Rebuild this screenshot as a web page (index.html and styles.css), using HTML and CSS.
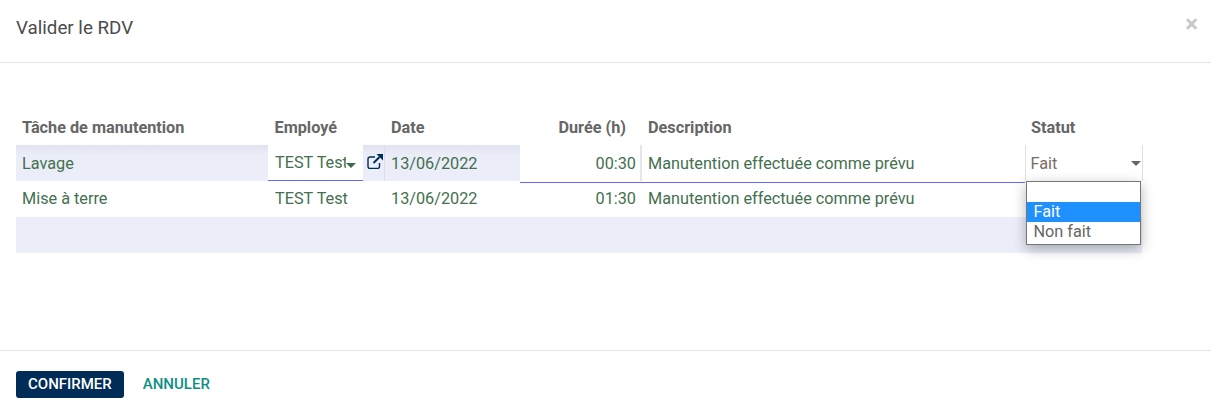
FILE: index.html
```
<!DOCTYPE html>
<html lang="fr">
<head>
<meta charset="utf-8">
<title>Valider le RDV</title>
<link rel="stylesheet" href="styles.css">
</head>
<body>
<div class="dialog">
  <header class="head">
    <h4 class="title">Valider le RDV</h4>
    <span class="close">×</span>
  </header>
  <main class="content">
    <table class="grid">
      <colgroup>
        <col class="c1"><col class="c2"><col class="c3"><col class="c4"><col class="c5"><col class="c6">
      </colgroup>
      <thead>
        <tr>
          <th>Tâche de manutention</th>
          <th>Employé</th>
          <th>Date</th>
          <th class="num">Durée (h)</th>
          <th>Description</th>
          <th>Statut</th>
        </tr>
      </thead>
      <tbody>
        <tr class="row selected">
          <td>Lavage</td>
          <td class="emp-cell">
            <div class="emp">
              <div class="emp-input"><span class="emp-text">TEST Test</span><i class="caret green"></i></div>
              <div class="emp-link">
                <svg width="16" height="15" viewBox="0 0 16 15" fill="none">
                  <path d="M8 3H3A2 2 0 0 0 1 5v7.5a2 2 0 0 0 2 2h7.5a2 2 0 0 0 2-2V9" stroke="#002d57" stroke-width="1.4"/>
                  <path d="M6.5 9 12.5 3" stroke="#002d57" stroke-width="2"/>
                  <path d="M9.5 0H16V6.5Z" fill="#002d57"/>
                </svg>
              </div>
            </div>
          </td>
          <td>13/06/2022</td>
          <td class="num edit sep-r">00:30</td>
          <td class="edit">Manutention effectuée comme prévu</td>
          <td class="status">
            <span>Fait</span><i class="caret grey"></i>
            <ul class="menu">
              <li>&nbsp;</li>
              <li class="active">Fait</li>
              <li>Non fait</li>
            </ul>
          </td>
        </tr>
        <tr class="row plain">
          <td>Mise à terre</td>
          <td>TEST Test</td>
          <td>13/06/2022</td>
          <td class="num">01:30</td>
          <td>Manutention effectuée comme prévu</td>
          <td></td>
        </tr>
        <tr class="row empty">
          <td></td><td></td><td></td><td></td><td></td><td></td>
        </tr>
      </tbody>
    </table>
  </main>
  <footer class="foot">
    <button class="btn primary">CONFIRMER</button>
    <button class="btn link">ANNULER</button>
  </footer>
</div>
</body>
</html>
```
FILE: styles.css
```
* { box-sizing: border-box; }
html, body { margin: 0; height: 100%; background: #fff; }
body { font-family: Roboto, "Liberation Sans", sans-serif; font-size: 16.25px; color: #666; overflow: hidden; }
.dialog { height: 412px; display: flex; flex-direction: column; }
.head { height: 63px; border-bottom: 1px solid #e6e6e6; padding: 16px 13px 0 16px; display: flex; justify-content: space-between; align-items: flex-start; }
.title { margin: 0; font-size: 18.75px; font-weight: 400; line-height: 24px; color: #4c4c4c; }
.close { font-size: 24px; font-weight: 700; line-height: 16px; color: #c8c8c8; }
.content { flex: 1; padding: 47px 69px 0 16px; }
.grid { width: 1126px; table-layout: fixed; border-collapse: collapse; }
.c1 { width: 252px; } .c2 { width: 117px; } .c3 { width: 135px; } .c4 { width: 122px; } .c5 { width: 383px; } .c6 { width: 117px; }
th { height: 35px; padding: 0 6px; text-align: left; font-weight: 700; font-size: 16.25px; color: #666; }
th:nth-child(2) { padding-left: 6.5px; }
th.num { text-align: right; padding-right: 16px; }
.row td { height: 36px; padding: 0 6px; font-size: 16.25px; color: #44704f; white-space: nowrap; }
.row td:nth-child(2) { padding-left: 7px; }
.row td.num { text-align: right; }
.plain td { padding-bottom: 2px; }
.selected td { background: linear-gradient(#e0e3ef, #ebeef9 10px); }
.empty td { background: #ebeef9; }
.row td.emp-cell { padding: 0; }
.emp { display: flex; height: 36px; }
.emp-input { width: 95px; height: 36px; background: #fff; border-bottom: 1px solid #6666ff; padding: 0 5px 1px 7px; display: flex; align-items: center; }
.emp-text { width: 71px; overflow: hidden; white-space: nowrap; flex: none; }
.emp-link { width: 22px; border-right: 1px solid #dcdee6; display: flex; align-items: center; justify-content: center; padding: 0 0 4px 2px; }
.row td.edit { background: #fff; position: relative; }
.row td.edit::after { content: ""; position: absolute; left: 0; right: 0; bottom: -2px; height: 1px; background: #6666ff; }
.row td.sep-r { box-shadow: inset -2px 0 0 #e6e6e6; }
.row td.status { position: relative; background: #fff; color: #7b6b66; padding-left: 5px; border-left: 1px solid #e0e0e0; border-right: 1px solid #e0e0e0; }
.caret { display: inline-block; width: 0; height: 0; border-left: 5px solid transparent; border-right: 5px solid transparent; border-top: 5px solid; }
.caret.green { color: #3d6b4a; margin-top: 7px; flex: none; }
.caret.grey { color: #666; position: absolute; right: 1px; top: 16px; }
.menu { position: absolute; left: 0; top: 36px; z-index: 2; width: 115px; height: 64px; margin: 0; padding: 0; list-style: none; background: #fff; border: 1px solid #767676; box-shadow: 0 4px 12px rgba(0,0,0,.3); color: #666; }
.menu li { height: 20px; line-height: 20px; padding: 0 7px; font-size: 16.25px; }
.menu li.active { background: #1e90ff; color: #fff; }
.foot { height: 62px; flex: none; border-top: 1px solid #e6e6e6; padding: 20px 16px 0; display: flex; align-items: flex-start; gap: 7px; }
.btn { height: 27px; border: 0; border-radius: 3px; font-family: inherit; font-size: 15px; font-weight: 500; padding: 0 12px 1px; background: none; }
.primary { background: #002d57; color: #fff; }
.link { color: #0d8f85; }
```
